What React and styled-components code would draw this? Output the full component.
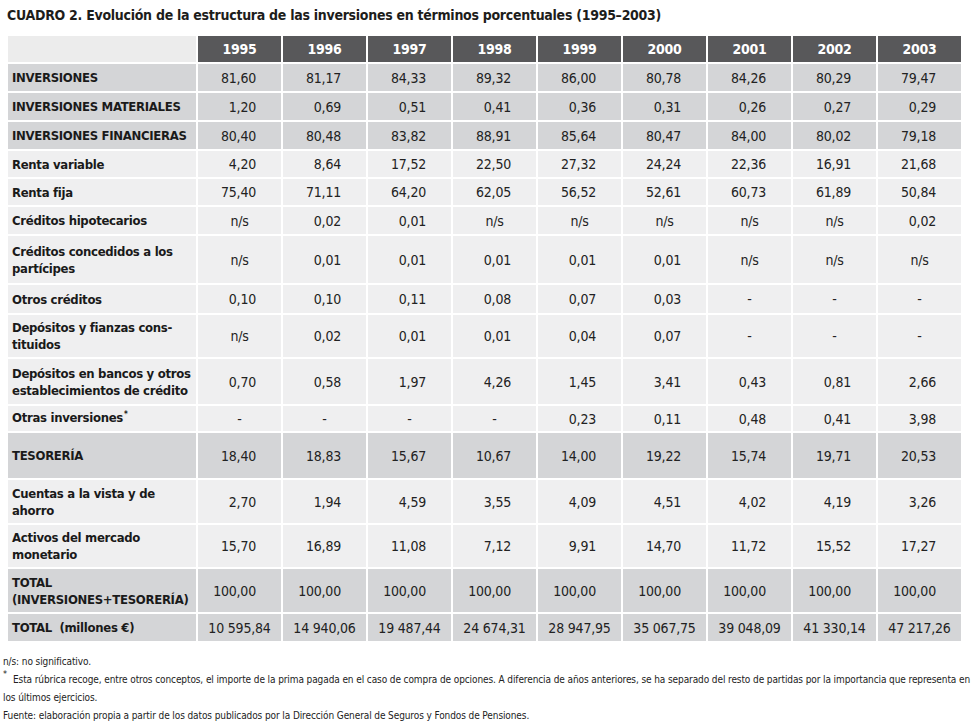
import React from "react";
import styled, { createGlobalStyle } from "styled-components";

const GlobalStyle = createGlobalStyle`
  body {
    margin: 0;
    background: #ffffff;
    font-family: "Liberation Sans Narrow", "DejaVu Sans Condensed", "Liberation Sans", sans-serif;
    color: #1d1d1b;
  }
`;

const Page = styled.div`
  width: 975px;
  height: 726px;
  padding-top: 5px;
  box-sizing: border-box;
`;

const Title = styled.div`
  padding-left: 7px;
  height: 20px;
  line-height: 20px;
  font-size: 14px;
  letter-spacing: -0.28px;
  font-weight: 700;
  margin-bottom: 11px;
`;

const Table = styled.div`
  margin-left: 8px;
  display: flex;
  flex-direction: column;
  gap: 2px;
`;

const Row = styled.div`
  display: grid;
  grid-template-columns: 188px repeat(9, 83px);
  column-gap: 2px;
  height: ${p => p.$h}px;
`;

const Label = styled.div`
  display: flex;
  align-items: center;
  padding-left: 4px;
  font-size: 13px;
  letter-spacing: -0.3px;
  line-height: 17px;
  font-weight: 700;
  color: #1a1a1a;
  white-space: nowrap;
  overflow: hidden;
  background: ${p => (p.$strong ? "#d4d5d7" : "#efeff0")};
`;

const Corner = styled.div`
  background: #ececec;
`;

const Year = styled.div`
  background: #58585a;
  color: #ffffff;
  font-weight: 700;
  font-size: 14px;
  letter-spacing: -0.3px;
  display: flex;
  align-items: center;
  justify-content: center;
`;

const Cell = styled.div`
  display: flex;
  align-items: center;
  justify-content: ${p => (p.$center ? "center" : "flex-end")};
  padding-right: ${p => (p.$center ? 0 : 25)}px;
  font-size: 14px;
  letter-spacing: -0.2px;
  color: #222222;
  background: ${p => (p.$strong ? "#d4d5d7" : "#efeff0")};
`;

const Sup = styled.span`
  position: relative;
  top: -5px;
  font-size: 8px;
  margin-left: 1px;
`;

const Notes = styled.div`
  margin-top: 12px;
  padding-left: 3px;
  font-size: 10px;
  letter-spacing: -0.1px;
  line-height: 18px;
  color: #222222;
`;

const NoteLine = styled.div`
  height: 18px;
  white-space: nowrap;
`;

const Star = styled.span`
  display: inline-block;
  width: 10px;
  position: relative;
  top: -6px;
  font-size: 9px;
`;

const years = ["1995", "1996", "1997", "1998", "1999", "2000", "2001", "2002", "2003"];

const rows = [
  { label: "INVERSIONES", strong: true, h: 27, v: ["81,60", "81,17", "84,33", "89,32", "86,00", "80,78", "84,26", "80,29", "79,47"] },
  { label: "INVERSIONES MATERIALES", strong: true, h: 27, v: ["1,20", "0,69", "0,51", "0,41", "0,36", "0,31", "0,26", "0,27", "0,29"] },
  { label: "INVERSIONES FINANCIERAS", strong: true, h: 27, v: ["80,40", "80,48", "83,82", "88,91", "85,64", "80,47", "84,00", "80,02", "79,18"] },
  { label: "Renta variable", h: 26, v: ["4,20", "8,64", "17,52", "22,50", "27,32", "24,24", "22,36", "16,91", "21,68"] },
  { label: "Renta fija", h: 26, v: ["75,40", "71,11", "64,20", "62,05", "56,52", "52,61", "60,73", "61,89", "50,84"] },
  { label: "Créditos hipotecarios", h: 27, v: ["n/s", "0,02", "0,01", "n/s", "n/s", "n/s", "n/s", "n/s", "0,02"] },
  { label: ["Créditos concedidos a los", "partícipes"], h: 47, v: ["n/s", "0,01", "0,01", "0,01", "0,01", "0,01", "n/s", "n/s", "n/s"] },
  { label: "Otros créditos", h: 28, v: ["0,10", "0,10", "0,11", "0,08", "0,07", "0,03", "-", "-", "-"] },
  { label: ["Depósitos y fianzas cons-", "tituidos"], h: 42, v: ["n/s", "0,02", "0,01", "0,01", "0,04", "0,07", "-", "-", "-"] },
  { label: ["Depósitos en bancos y otros", "establecimientos de crédito"], h: 45, v: ["0,70", "0,58", "1,97", "4,26", "1,45", "3,41", "0,43", "0,81", "2,66"] },
  { label: "Otras inversiones", star: true, h: 25, v: ["-", "-", "-", "-", "0,23", "0,11", "0,48", "0,41", "3,98"] },
  { label: "TESORERÍA", strong: true, h: 45, v: ["18,40", "18,83", "15,67", "10,67", "14,00", "19,22", "15,74", "19,71", "20,53"] },
  { label: ["Cuentas a la vista y de", "ahorro"], h: 43, v: ["2,70", "1,94", "4,59", "3,55", "4,09", "4,51", "4,02", "4,19", "3,26"] },
  { label: ["Activos del mercado", "monetario"], h: 42, v: ["15,70", "16,89", "11,08", "7,12", "9,91", "14,70", "11,72", "15,52", "17,27"] },
  { label: ["TOTAL", "(INVERSIONES+TESORERÍA)"], strong: true, h: 43, v: ["100,00", "100,00", "100,00", "100,00", "100,00", "100,00", "100,00", "100,00", "100,00"] },
  { label: "TOTAL  (millones €)", strong: true, center: true, h: 27, v: ["10 595,84", "14 940,06", "19 487,44", "24 674,31", "28 947,95", "35 067,75", "39 048,09", "41 330,14", "47 217,26"] },
];

const renderLabel = (row) => {
  if (Array.isArray(row.label)) {
    return (
      <span>
        {row.label[0]}
        <br />
        {row.label[1]}
      </span>
    );
  }
  return (
    <span style={{ whiteSpace: "pre" }}>
      {row.label}
      {row.star && <Sup>*</Sup>}
    </span>
  );
};

const App = () => {
  return (
    <Page>
      <GlobalStyle />
      <Title>CUADRO 2. Evolución de la estructura de las inversiones en términos porcentuales (1995–2003)</Title>
      <Table>
        <Row $h={26}>
          <Corner />
          {years.map(y => (
            <Year key={y}>{y}</Year>
          ))}
        </Row>
        {rows.map((row, i) => (
          <Row key={i} $h={row.h}>
            <Label $strong={row.strong}>{renderLabel(row)}</Label>
            {row.v.map((val, j) => (
              <Cell key={j} $strong={row.strong} $center={row.center || val === "n/s" || val === "-"}>
                {val}
              </Cell>
            ))}
          </Row>
        ))}
      </Table>
      <Notes>
        <NoteLine>n/s: no significativo.</NoteLine>
        <NoteLine>
          <Star>*</Star>
          Esta rúbrica recoge, entre otros conceptos, el importe de la prima pagada en el caso de compra de opciones. A diferencia de años anteriores, se ha separado del resto de partidas por la importancia que representa en
        </NoteLine>
        <NoteLine>los últimos ejercicios.</NoteLine>
        <NoteLine>Fuente: elaboración propia a partir de los datos publicados por la Dirección General de Seguros y Fondos de Pensiones.</NoteLine>
      </Notes>
    </Page>
  );
};

export default App;
